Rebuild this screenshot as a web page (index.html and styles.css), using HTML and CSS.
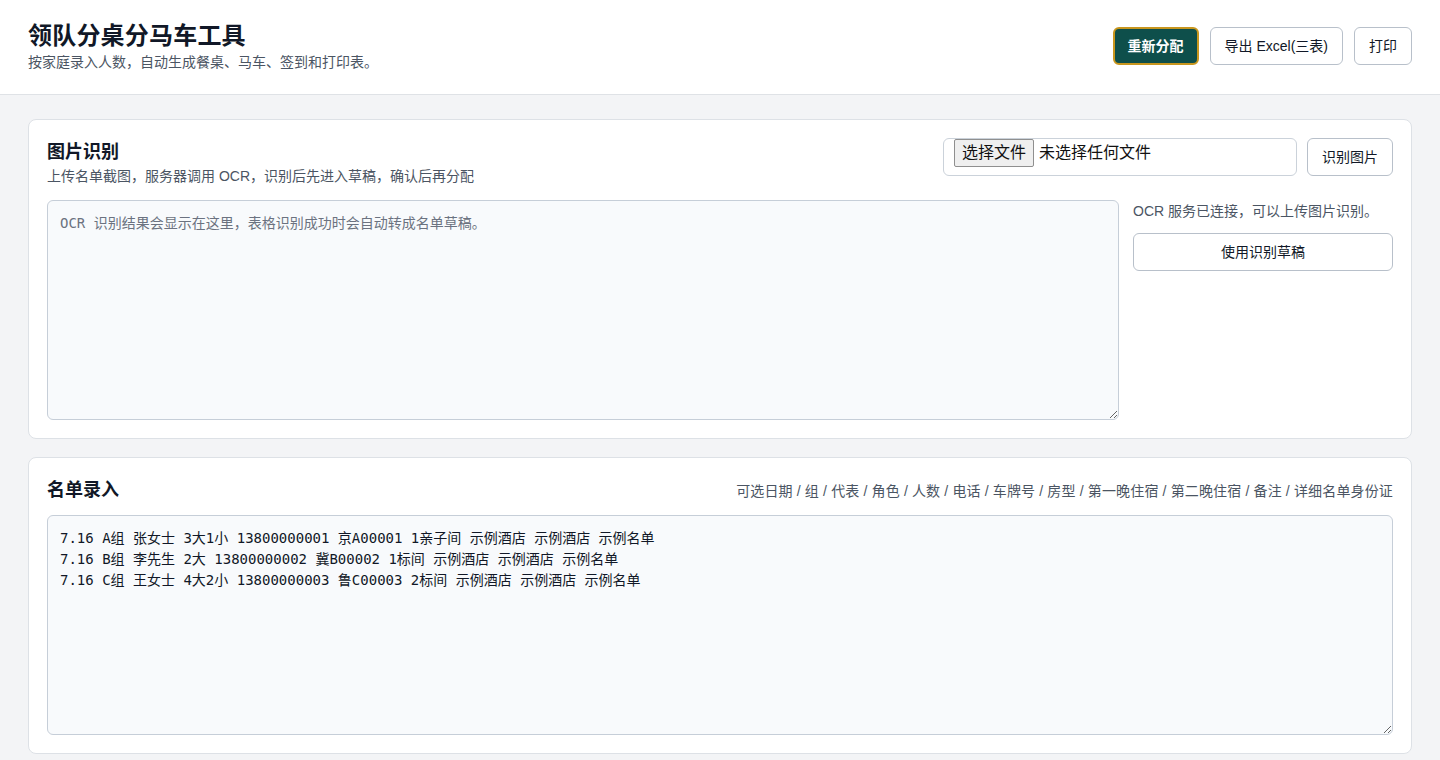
FILE: index.html
```html
<!DOCTYPE html>
<html lang="zh-CN">
<head>
    <meta charset="UTF-8">
    <meta name="viewport" content="width=device-width, initial-scale=1.0">
    <title>领队分桌分马车工具</title>
    <link rel="stylesheet" href="styles.css">
</head>
<body>
    <header class="topbar">
        <div class="brand">
            <h1>领队分桌分马车工具</h1>
            <p class="sub">按家庭录入人数，自动生成餐桌、马车、签到和打印表。</p>
        </div>
        <div class="actions">
            <button class="btn btn-primary">重新分配</button>
            <button class="btn">导出 Excel(三表)</button>
            <button class="btn">打印</button>
        </div>
    </header>

    <main class="page">
        <!-- OCR card -->
        <section class="card">
            <div class="card-head">
                <div>
                    <h2>图片识别</h2>
                    <p class="sub">上传名单截图，服务器调用 OCR，识别后先进入草稿，确认后再分配</p>
                </div>
                <div class="upload">
                    <label class="file-box">
                        <span class="file-btn">选择文件</span>
                        <span class="file-name">未选择任何文件</span>
                    </label>
                    <button class="btn">识别图片</button>
                </div>
            </div>
            <div class="ocr-body">
                <textarea class="text-area" placeholder="OCR 识别结果会显示在这里，表格识别成功时会自动转成名单草稿。"></textarea>
                <div class="ocr-side">
                    <p class="status">OCR 服务已连接，可以上传图片识别。</p>
                    <button class="btn btn-block">使用识别草稿</button>
                </div>
            </div>
        </section>

        <!-- Roster card -->
        <section class="card">
            <div class="card-head roster-head">
                <h2>名单录入</h2>
                <span class="hint">可选日期 / 组 / 代表 / 角色 / 人数 / 电话 / 车牌号 / 房型 / 第一晚住宿 / 第二晚住宿 / 备注 / 详细名单身份证</span>
            </div>
            <textarea class="text-area roster">7.16 A组 张女士 3大1小 13800000001 京A00001 1亲子间 示例酒店 示例酒店 示例名单
7.16 B组 李先生 2大 13800000002 冀B00002 1标间 示例酒店 示例酒店 示例名单
7.16 C组 王女士 4大2小 13800000003 鲁C00003 2标间 示例酒店 示例酒店 示例名单</textarea>
        </section>
    </main>
</body>
</html>
```

FILE: styles.css
```css
body {
    margin: 0;
    padding: 0;
    font-family: "Liberation Sans", "Noto Sans CJK SC", sans-serif;
    background-color: #f3f4f6;
    color: #111827;
}

h1, h2, p {
    margin: 0;
}

/* Header bar */
.topbar {
    display: flex;
    justify-content: space-between;
    align-items: center;
    background-color: #fff;
    padding: 20px 28px 22px;
    border-bottom: 1px solid #dfe2e6;
}

.topbar h1 {
    font-size: 24px;
    line-height: 32px;
    font-weight: 700;
    letter-spacing: 0.2px;
}

.sub {
    font-size: 14px;
    line-height: 20px;
    color: #4b5563;
}

.actions {
    display: flex;
    gap: 11px;
}

/* Buttons */
.btn {
    font-family: inherit;
    font-size: 14px;
    line-height: 20px;
    padding: 8px 14px;
    background-color: #fff;
    color: #111827;
    border: 1px solid #b8c0ca;
    border-radius: 6px;
    cursor: pointer;
}

.btn-primary {
    background-color: #0e4f4b;
    color: #fff;
    border: 2px solid #c8961e;
    padding: 7px 13px;
    font-weight: 700;
}

.btn-block {
    width: 100%;
}

/* Page content */
.page {
    padding: 24px 28px 0;
    display: flex;
    flex-direction: column;
    gap: 18px;
}

.card {
    background-color: #fff;
    border: 1px solid #dde1e6;
    border-radius: 8px;
    padding: 18px;
}

.card h2 {
    font-size: 18px;
    line-height: 28px;
    font-weight: 700;
}

.card-head {
    display: flex;
    justify-content: space-between;
    align-items: flex-start;
    margin-bottom: 14px;
}

.roster-head {
    align-items: center;
    margin-bottom: 11px;
}

.hint {
    font-size: 14px;
    color: #4b5563;
    letter-spacing: 0.15px;
}

/* Upload controls */
.upload {
    display: flex;
    gap: 10px;
}

.file-box {
    display: flex;
    align-items: flex-start;
    gap: 5px;
    width: 332px;
    height: 36px;
    padding: 0 10px;
    border: 1px solid #cbd2da;
    border-radius: 6px;
    font-size: 16px;
    color: #111;
}

.file-btn {
    padding: 2px 7px 3px;
    line-height: 21px;
    background-color: #efefef;
    border: 1px solid #8f8f8f;
    border-radius: 2px;
}

.file-name {
    line-height: 28px;
}

/* OCR body */
.ocr-body {
    display: grid;
    grid-template-columns: 1fr 260px;
    gap: 14px;
}

.text-area {
    display: block;
    box-sizing: border-box;
    width: 100%;
    height: 220px;
    padding: 12px;
    font-family: "DejaVu Sans Mono", "Noto Sans CJK SC", monospace;
    font-size: 14px;
    line-height: 21px;
    color: #111827;
    background-color: #f8fafc;
    border: 1px solid #c6ced8;
    border-radius: 6px;
    resize: vertical;
}

.text-area::placeholder {
    color: #6b7280;
}

.status {
    font-size: 14px;
    line-height: 20px;
    color: #4b5563;
    margin: 1px 0 12px;
}
```
